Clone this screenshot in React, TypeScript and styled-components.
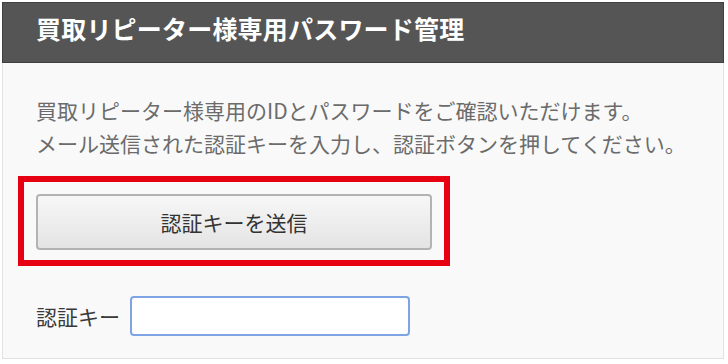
import React from "react";
import styled, { createGlobalStyle } from "styled-components";

const GlobalStyle = createGlobalStyle`
  html, body {
    margin: 0;
    padding: 0;
    background: #ffffff;
  }
  body {
    font-family: "Noto Sans CJK JP", "Noto Sans", sans-serif;
  }
`;

const Panel = styled.section`
  margin: 2px 0 0 2px;
  width: 722px;
  height: 357px;
  box-sizing: border-box;
  background: #f9f9f9;
  border: 1px solid #e2e2e2;
  border-top: none;
  display: flex;
  flex-direction: column;
`;

const Header = styled.header`
  height: 61px;
  box-sizing: border-box;
  margin: 0 -1px;
  background: #555555;
  border: 1px solid #404040;
  display: flex;
  align-items: center;
  padding: 0 0 8px 33px;
`;

const Title = styled.h1`
  margin: 0;
  font-size: 25px;
  line-height: 1;
  font-weight: 700;
  color: #ffffff;
  letter-spacing: 0.2px;
`;

const Body = styled.div`
  padding: 31px 0 0 33px;
  display: flex;
  flex-direction: column;
`;

const Intro = styled.p`
  margin: 0;
  font-size: 21px;
  line-height: 33px;
  color: #6b6b6b;
  white-space: nowrap;
`;

const Highlight = styled.div`
  margin: 16px 0 0 -18px;
  width: 432px;
  height: 90px;
  box-sizing: border-box;
  border: 6px solid #e60012;
  padding: 12px 12px 10px 12px;
  display: flex;
`;

const SendButton = styled.button`
  flex: 1;
  height: 56px;
  box-sizing: border-box;
  border: 2px solid #b3b3b3;
  border-radius: 4px;
  background: linear-gradient(#f7f7f7, #e4e4e4);
  font-family: inherit;
  font-size: 21px;
  color: #333333;
  cursor: pointer;
  padding: 0;
`;

const KeyRow = styled.div`
  margin-top: 30px;
  display: flex;
  align-items: center;
  gap: 10px;
`;

const KeyLabel = styled.label`
  font-size: 21px;
  color: #3a3a3a;
  line-height: 1;
`;

const KeyInput = styled.input`
  width: 280px;
  height: 40px;
  box-sizing: border-box;
  border: 2px solid #7ea4e4;
  border-radius: 4px;
  background: #ffffff;
  outline: none;
  font-size: 18px;
  padding: 0 8px;
`;

export default function App() {
  return (
    <>
      <GlobalStyle />
      <Panel>
        <Header>
          <Title>買取リピーター様専用パスワード管理</Title>
        </Header>
        <Body>
          <Intro>
            買取リピーター様専用のIDとパスワードをご確認いただけます。
            <br />
            メール送信された認証キーを入力し、認証ボタンを押してください。
          </Intro>
          <Highlight>
            <SendButton type="button">認証キーを送信</SendButton>
          </Highlight>
          <KeyRow>
            <KeyLabel htmlFor="authkey">認証キー</KeyLabel>
            <KeyInput id="authkey" type="text" />
          </KeyRow>
        </Body>
      </Panel>
    </>
  );
}
